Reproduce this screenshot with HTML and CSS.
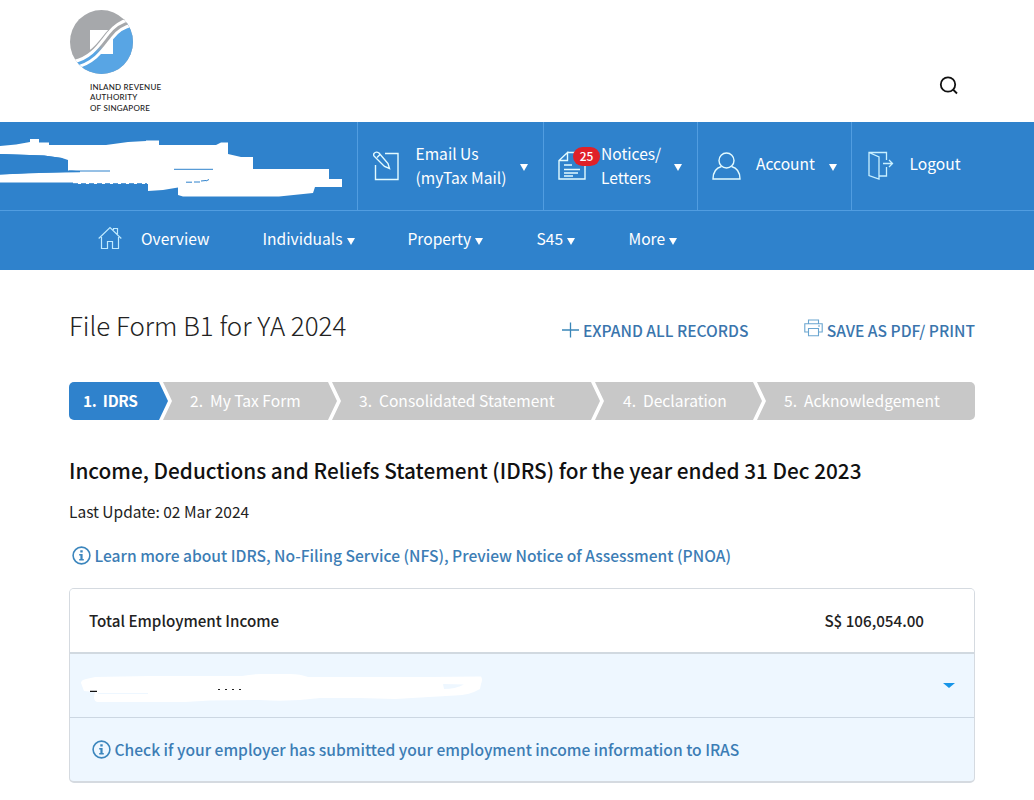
FILE: index.html
```html
<!DOCTYPE html>
<html lang="en">
<head>
<meta charset="utf-8">
<title>File Form B1 for YA 2024</title>
<link rel="stylesheet" href="styles.css">
</head>
<body>
<header class="masthead">
  <div class="brand">
    <svg class="brand-mark" width="64" height="66" viewBox="0 0 64 66">
      <defs>
        <clipPath id="disc"><ellipse cx="31.5" cy="32" rx="31.500" ry="32"/></clipPath>
        <linearGradient id="swoosh" gradientUnits="userSpaceOnUse" x1="20" y1="47" x2="36" y2="30"><stop offset=".3" stop-color="#58a5e4"/><stop offset=".7" stop-color="#a6a8ab"/></linearGradient>
      </defs>
      <g clip-path="url(#disc)">
        <rect width="64" height="66" fill="#a6a8ab"/>
        <path d="M0 55C22 51 32 34 40 24C46 17 54 13 64 11V66H0Z" fill="#58a5e4"/>
        <path d="M20 20H43V44H20Z" fill="#fff"/>
        <path d="M6 48C22 45 30 32 37 23.500C43 16 50 11 60 8" fill="none" stroke="#a6a8ab" stroke-width="3"/>
        <path d="M4 54.500C23 51 32 36 40 26C46 18 52 14 62 12" fill="none" stroke="#fff" stroke-width="9"/>
        <path d="M4 54.500C23 51 32 36 40 26C46 18 52 14 62 12" fill="none" stroke="url(#swoosh)" stroke-width="3"/>
      </g>
    </svg>
    <div class="brand-name">INLAND REVENUE<br>AUTHORITY<br>OF SINGAPORE</div>
  </div>
  <svg class="search" width="20" height="20" viewBox="0 0 20 20" fill="none" stroke="#111" stroke-width="1.800"><circle cx="9" cy="8.500" r="7.200"/><path d="M14 13.500L18 17.500"/></svg>
</header>
<div class="userbar">
  <div class="user">
    <svg width="357" height="88" viewBox="0 122 357 88">
      <path fill="#fff" d="M0 146L16 144.500L30 142V139H39V142.500H49V145H106L128 142L146 141V140.500H159V145H216L221 142.500H228V154L241 157H253V169H329V179H342V187H315L313 193L279 196.500H183L178 195V187.500L163 190L148 191V184H73V182.500H0V174.500L78 171.500L68 169V160L62 158L44 155.500L0 154Z"/>
      <path fill="#2f82cc" d="M0 174.500L28 173L80 172.200V171L68 170.500L62 158L44 155.500L0 154Z"/>
      <path fill="#fff" d="M68 160L110 158V170.500H68Z"/>
      <path fill="none" stroke="#2f82cc" d="M69 171H110M174 169.300H213M186 182.200H192M194 182H200M201 181L206 180.500M206 181L209 179.500"/>
      <path fill="none" stroke="#2f82cc" stroke-dasharray="5 3" d="M73 183.700H147"/>
    </svg>
  </div>
  <a class="tool mail">
    <svg width="26" height="30" viewBox="0 0 26 30" fill="none" stroke="#e3fbff" stroke-width="1.400"><path d="M12 2.500H25V28.500H2.500V14"/><path d="M1 2.500Q3 0 6 2L15 12.500L16.500 17.500L11.500 15.500L1.500 5.500Q0 4 1 2.500M4 6.500L7 3.500"/></svg>
    <span class="t">Email Us<br>(myTax Mail)</span><i class="caret"></i>
  </a>
  <a class="tool notices">
    <span class="doc"><svg width="28" height="30" viewBox="0 0 28 30" fill="none" stroke="#e3fbff" stroke-width="1.400"><path d="M9.500 1.500H27V28H1V9.500L9.500 1.500V9.500H1M6 14H14M6 18.500H22M6 22H20M6 25H15"/></svg><b class="badge">25</b></span>
    <span class="t">Notices/<br>Letters</span><i class="caret"></i>
  </a>
  <a class="tool account">
    <svg width="29" height="28" viewBox="0 0 29 28" fill="none" stroke="#e3fbff" stroke-width="1.400"><circle cx="14.500" cy="8.500" r="7.500"/><path d="M9.500 14.500C4 16 1 20.500 1 27H28C28 20.500 25 16 19.500 14.500"/></svg>
    <span class="t">Account</span><i class="caret"></i>
  </a>
  <a class="tool logout">
    <svg width="26" height="29" viewBox="0 0 26 29" fill="none" stroke="#c9f0ff" stroke-width="1.300"><path d="M18.500 9V1.500H1V24.500L11 28V6L1 1.500M11 25H18.500V16M15 12.500H24.500M21 9L24.500 12.500L21 16"/></svg>
    <span class="t">Logout</span>
  </a>
</div>
<nav class="nav">
  <a class="n1"><svg width="24" height="24" viewBox="0 0 24 24" fill="none" stroke="#bfeaff" stroke-width="1.200"><path d="M.7 12.500L12 1.500L23.300 12.500M3.500 11V22.500H9.500V15.500H14.500V22.500H20.500V11M15.500 4V2.500H19.500V8"/></svg><span>Overview</span></a>
  <a class="n2"><span>Individuals</span><i class="caret"></i></a>
  <a class="n3"><span>Property</span><i class="caret"></i></a>
  <a class="n4"><span>S45</span><i class="caret"></i></a>
  <a class="n5"><span>More</span><i class="caret"></i></a>
</nav>
<main class="page">
  <div class="title-row">
    <h1>File Form B1 for YA 2024</h1>
    <a class="action expand"><svg width="18" height="18" viewBox="0 0 18 18" stroke="#3a86b8" stroke-width="1.300"><path d="M0 9H17M8.500 1.500V16.500"/></svg><span>EXPAND ALL RECORDS</span></a>
    <a class="action print"><svg width="19" height="18" viewBox="0 0 19 18" fill="none" stroke="#6aa5d0" stroke-width="1.100"><path d="M4.500 4.500V1H14.500V4.500M4.500 13H.8V4.800H18.200V13H14.500M4.500 9.500H14.500V16.800H4.500ZM14 7H16"/></svg><span>SAVE AS PDF/ PRINT</span></a>
  </div>
  <ol class="steps">
    <li class="s1"><span>1.&nbsp; IDRS</span></li>
    <li class="s2"><span>2.&nbsp; My Tax Form</span></li>
    <li class="s3"><span>3.&nbsp; Consolidated Statement</span></li>
    <li class="s4"><span>4.&nbsp; Declaration</span></li>
    <li class="s5"><span>5.&nbsp; Acknowledgement</span></li>
  </ol>
  <h2>Income, Deductions and Reliefs Statement (IDRS) for the year ended 31 Dec 2023</h2>
  <p class="updated">Last Update: 02 Mar 2024</p>
  <a class="info learn"><svg width="19" height="19" viewBox="0 0 19 19"><circle cx="9.500" cy="9.500" r="8.400" fill="none" stroke="#3c86bd" stroke-width="1.600"/><path d="M8.300 4.300H10.700V6.500H8.300ZM7.200 8H10.600V13H11.800V14.500H7.200V13H8.400V9.500H7.200Z" fill="#3c86bd"/></svg><span>Learn more about IDRS, No-Filing Service (NFS), Preview Notice of Assessment (PNOA)</span></a>
  <section class="card">
    <div class="total"><span class="total-label">Total Employment Income</span><span class="amount">S$ 106,054.00</span></div>
    <div class="employer">
      <svg width="420" height="40" viewBox="70 665 420 40"><path fill="#fff" d="M81 682Q81 679 86 678L95 676L150 675H242Q252 673 262 673H290Q300 673 308 676H430L481 675.500Q483 678 481 683L480 688Q470 694 455 694.500L395 698L360 697L320 697Q290 701 260 699L210 699.500L185 701H97Q94 700 94 696L95 691L84 690Z"/><path stroke="#111" stroke-width="1.300" d="M90 690.300H97"/><path stroke="#222" stroke-dasharray="2 5" d="M218 688.500H246"/><path fill="#eef7ff" d="M443 683L464 683.500Q455 688 444 688Z"/><path stroke="#eef7ff" d="M98 692.500H148"/></svg>
      <i class="open"></i>
    </div>
    <a class="info check"><svg width="19" height="19" viewBox="0 0 19 19"><circle cx="9.500" cy="9.500" r="8.400" fill="none" stroke="#3c86bd" stroke-width="1.600"/><path d="M8.300 4.300H10.700V6.500H8.300ZM7.200 8H10.600V13H11.800V14.500H7.200V13H8.400V9.500H7.200Z" fill="#3c86bd"/></svg><span>Check if your employer has submitted your employment income information to IRAS</span></a>
  </section>
</main>
</body>
</html>
```
FILE: styles.css
```css
* { box-sizing: border-box; }
body {
  margin: 0;
  height: 800px;
  overflow: hidden;
  background: #fff;
  color: #222;
  font: 400 15.600px/24px "Noto Sans CJK SC", "Noto Sans", sans-serif;
}
svg { display: block; flex: none; }
span { white-space: nowrap; }

.masthead { height: 122px; display: flex; justify-content: space-between; padding: 10px 75px 0 70px; }
.brand-name { margin: 6px 0 0 20px; font: 500 8px/10.300px Lato, sans-serif; letter-spacing: .2px; color: #222; }
.search { margin-top: 66px; }

.userbar { display: flex; height: 89px; background: #2f82cc; border-bottom: 1px solid #519de0; color: #fff; }
.user { width: 356.500px; overflow: hidden; }
.tool { display: flex; align-items: center; border-left: 1px solid #519de0; }
.tool > svg { margin-top: -1px; }
.caret { width: 0; height: 0; flex: none; border: solid transparent; border-width: 7.500px 4px 0; border-top-color: #fff; }
.mail { width: 186.500px; padding-left: 15px; }
.mail .t { margin: -2px 0 0 17px; width: 104px; }
.tool .caret { margin-top: 3px; }
.notices { width: 154px; padding-left: 14px; }
.doc { position: relative; width: 28px; margin-top: -1px; }
.badge { position: absolute; left: 15px; top: -4px; width: 27px; height: 19px; border-radius: 10px; background: #e02128; font-size: 12px; font-weight: 500; line-height: 18px; text-align: center; }
.notices .t { margin: -2px 0 0 15px; width: 73px; }
.account { width: 154px; padding-left: 14px; }
.account .t { margin: -6px 0 0 15px; width: 73px; }
.account .caret { margin-top: 2px; }
.logout { flex: 1; padding-left: 16px; }
.logout > svg { margin-top: -2px; }
.logout .t { margin: -6px 0 0 15.500px; }

.nav { display: flex; align-items: center; height: 59px; padding: 0 0 5px 98px; background: #2f82cc; color: #fff; }
.nav a { display: flex; align-items: center; gap: 4px; }
.nav .caret { margin-top: 6px; }
.nav .n1 { width: 164.500px; gap: 19px; }
.n1 svg { margin-top: -1px; }
.nav .n2 { width: 145px; }
.nav .n3 { width: 129px; }
.nav .n4 { width: 92px; }

.page { padding: 0 59px 0 69px; }
.title-row { display: flex; align-items: center; height: 112px; }
h1 { margin: -2px 0 0; width: 493px; font-size: 25.900px; font-weight: 300; line-height: 36px; white-space: nowrap; }
.action { display: flex; align-items: center; color: #3a75ad; font-size: 15.600px; font-weight: 500; }
.action span { margin-top: -1px; }
.expand { width: 242px; gap: 3px; margin-top: 8px; }
.print { gap: 4px; margin-top: 8px; }
.print svg { margin-top: -5px; }

.steps { display: flex; margin: 0; padding: 0; list-style: none; height: 38px; border-radius: 5px; overflow: hidden; color: #fff; line-height: 37px; }
.steps li { background: #c8c8c8; clip-path: polygon(0 0, calc(100% - 9px) 0, 100% 50%, calc(100% - 9px) 100%, 0 100%, 9px 50%); margin-right: -5px; padding-left: 27px; }
.steps .s1 { width: 99px; padding-left: 14px; background: #2f82cc; font-size: 15.400px; font-weight: 700; letter-spacing: -.3px; clip-path: polygon(0 0, 90px 0, 100% 50%, 90px 100%, 0 100%); }
.s2 { width: 174px; }
.s3 { width: 268px; }
.s4 { width: 167px; }
.steps .s4 { padding-left: 28px; }
.steps .s5 { flex: 1; margin: 0; clip-path: polygon(0 0, 100% 0, 100% 100%, 0 100%, 9px 50%); }

h2 { margin: 35px 0 0; font-size: 20.780px; font-weight: 500; line-height: 30px; color: #111; white-space: nowrap; }
.updated { margin: 14px 0 0; font-size: 15.500px; line-height: 24px; }
.info { display: flex; align-items: center; gap: 3.500px; color: #3c7db5; font-weight: 500; }
.info span { margin-top: -1px; }
.learn { margin: 20px 0 0 3px; height: 24px; }

.card { margin-top: 21px; height: 195px; border: 1px solid #d5dae0; border-bottom-width: 2px; border-radius: 5px; overflow: hidden; background: #eef7ff; }
.total { display: flex; align-items: center; justify-content: space-between; height: 65px; padding: 0 50px 2px 19px; background: #fff; border-bottom: 2px solid #d1d9e0; color: #222; font-size: 15.200px; font-weight: 500; }
.employer { display: flex; align-items: center; justify-content: space-between; height: 64px; padding-right: 19px; border-bottom: 1px solid #ccd7e2; }
.open { border: solid transparent; border-width: 5.500px 6px 0; border-top-color: #1795e8; }
.check { height: 63px; padding-left: 22px; }
```
